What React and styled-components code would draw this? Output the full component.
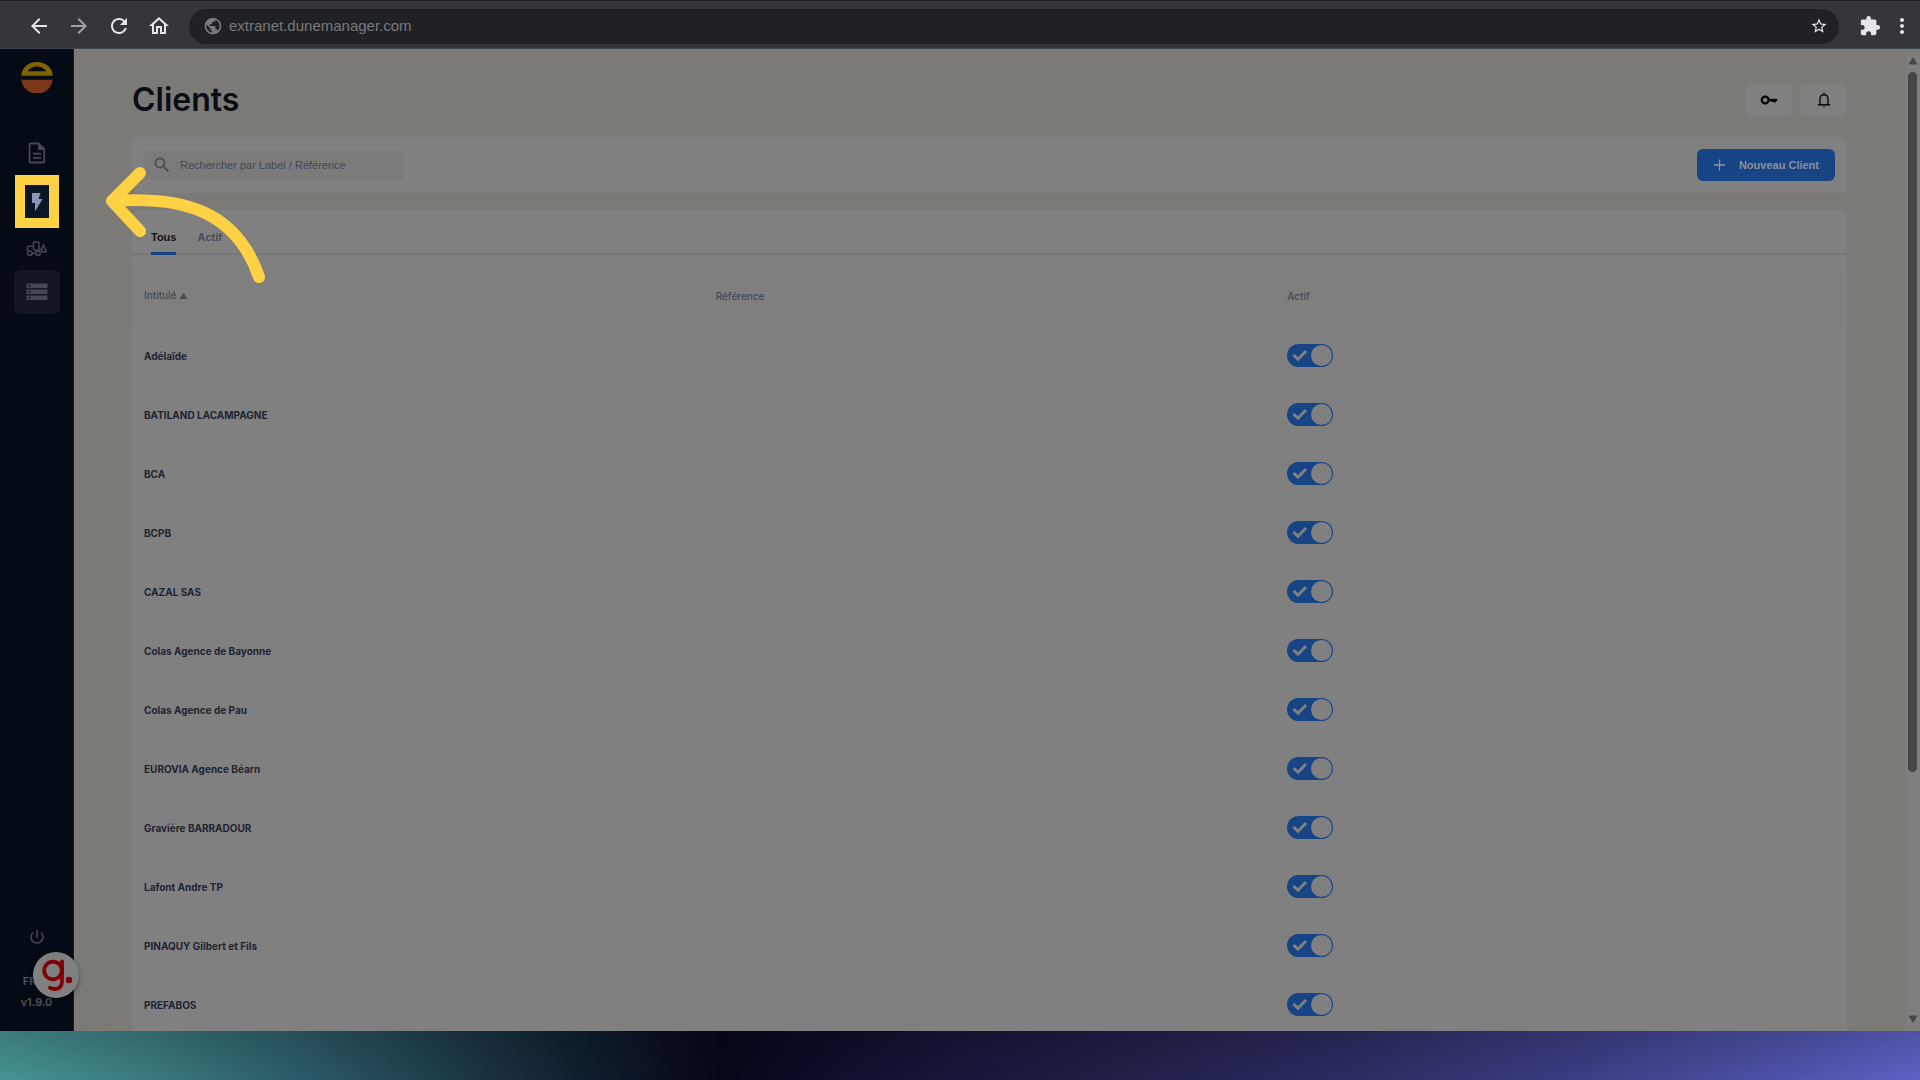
import React from 'react';
import styled, { createGlobalStyle } from 'styled-components';
import { MdArrowBack, MdArrowForward, MdRefresh, MdOutlineHome, MdPublic, MdStarBorder, MdExtension, MdMoreVert, MdSearch, MdPowerSettingsNew } from 'react-icons/md';

const Global = createGlobalStyle`
  * { box-sizing: border-box; }
  body { margin: 0; background: #04040f; font-family: Inter, "Liberation Sans", sans-serif; }
  button, input { font-family: inherit; margin: 0; }
  button { border: 0; padding: 0; background: none; cursor: pointer; }
  svg { display: block; flex: none; }
`;

const Page = styled.div`
  position: relative;
  display: flex;
  flex-direction: column;
  height: 100vh;
  overflow: hidden;
`;

const BrowserBar = styled.header`
  flex: none;
  display: flex;
  align-items: center;
  height: 49px;
  padding: 3px 6px 0 27px;
  background: #35363a;
  border-top: 1px solid #1e1f22;
  border-bottom: 1px solid #3c464c;
`;

const NavGroup = styled.div`
  display: flex;
  gap: 16px;
`;

const BarButton = styled.button`
  display: flex;
  align-items: center;
  justify-content: center;
  width: 24px;
  height: 24px;
  color: ${(p) => p.$color || '#e4e6e8'};
`;

const AddressBar = styled.div`
  flex: 1;
  display: flex;
  align-items: center;
  height: 35px;
  margin: 0 19px 0 18px;
  padding: 0 8px 0 14px;
  border-radius: 18px;
  background: #202124;
  color: #77797c;
`;

const AddressInput = styled.input`
  flex: 1;
  min-width: 0;
  margin-left: 6px;
  padding: 0;
  border: 0;
  outline: 0;
  background: transparent;
  color: #77797c;
  font-family: "Liberation Sans", sans-serif;
  font-size: 15px;
  line-height: 20px;
`;

const BarActions = styled.div`
  display: flex;
  gap: 8px;
`;

const Shell = styled.div`
  flex: 1;
  display: flex;
  min-height: 0;
`;

const Sidebar = styled.aside`
  position: relative;
  flex: none;
  display: flex;
  flex-direction: column;
  align-items: center;
  width: 74px;
  padding: 13px 0 18px;
  background: #040b14;
  border-right: 1px solid #1b2027;
`;

const SideNav = styled.nav`
  display: flex;
  flex-direction: column;
  align-items: center;
  gap: 1px;
  margin-top: 38px;
`;

const SideLink = styled.a`
  display: flex;
  align-items: center;
  justify-content: center;
  width: 46px;
  height: ${(p) => p.$height || 44}px;
  border-radius: 6px;
  background: ${(p) => (p.$active ? '#131520' : 'transparent')};
  color: ${(p) => p.$color || '#454753'};
`;

const Highlighted = styled(SideLink)`
  width: 44px;
  height: 53px;
  border: 10px solid #ffd144;
  border-radius: 0;
  background: #0b1727;
`;

const SideFoot = styled.div`
  display: flex;
  flex-direction: column;
  align-items: center;
  margin-top: auto;
  color: #4f525c;
  font-size: 11px;
  font-weight: 600;
  line-height: 21px;
`;

const PowerButton = styled.button`
  margin-bottom: 25px;
  color: #4a4c56;
`;

const HelpBadge = styled.button`
  position: absolute;
  left: 33px;
  bottom: 33px;
  width: 46px;
  height: 46px;
  border-radius: 50%;
  background: #808080;
  box-shadow: 0 2px 5px rgba(0, 0, 0, 0.4);
`;

const Main = styled.main`
  flex: 1;
  min-width: 0;
  padding: 31px 58px 0;
  overflow: hidden;
  background: #7c7a77;
`;

const TitleRow = styled.div`
  display: flex;
  align-items: center;
  justify-content: space-between;
  height: 40px;
`;

const Title = styled.h1`
  margin: 0;
  color: #0a0d14;
  font-size: 32px;
  font-weight: 600;
  line-height: 40px;
`;

const IconGroup = styled.div`
  display: flex;
  gap: 8px;
`;

const IconButton = styled.button`
  display: flex;
  align-items: center;
  justify-content: center;
  width: 47px;
  height: 34px;
  border-radius: 6px;
  background: #808080;
  color: #08090c;
`;

const Toolbar = styled.section`
  display: flex;
  align-items: center;
  justify-content: space-between;
  height: 56px;
  margin: 17px 0;
  padding: 0 12px;
  border-radius: 6px;
  background: #808080;
`;

const SearchBox = styled.label`
  display: flex;
  align-items: center;
  gap: 8px;
  width: 260px;
  height: 29px;
  padding: 0 8px;
  border-radius: 4px;
  background: #7b7b7b;
  color: #474a55;
`;

const SearchInput = styled.input`
  flex: 1;
  min-width: 0;
  padding: 0;
  border: 0;
  outline: 0;
  background: transparent;
  font-family: "Liberation Sans", sans-serif;
  font-size: 11px;
  line-height: 16px;
  &::placeholder { color: #434855; opacity: 1; }
`;

const PrimaryButton = styled.button`
  display: flex;
  align-items: center;
  justify-content: space-between;
  width: 138px;
  height: 32px;
  padding: 0 16px;
  border-radius: 6px;
  background: #164484;
  color: #8b919c;
  font-family: "Liberation Sans", sans-serif;
  font-size: 11px;
  font-weight: 700;
`;

const Panel = styled.section`
  border-radius: 6px 6px 0 0;
  background: #808080;
`;

const Tabs = styled.div`
  display: flex;
  gap: 21px;
  height: 45px;
  padding-left: 19px;
  border-bottom: 2px solid #75777a;
`;

const Tab = styled.button`
  height: 45px;
  padding-top: 11px;
  border-bottom: 3px solid ${(p) => (p.$active ? '#164484' : 'transparent')};
  color: ${(p) => (p.$active ? '#10131a' : '#474a55')};
  font-family: "Liberation Sans", sans-serif;
  font-size: 11px;
  font-weight: 700;
  line-height: 16px;
`;

const Table = styled.table`
  width: 100%;
  margin-top: 12px;
  border-collapse: collapse;
  table-layout: fixed;
`;

const HeadCell = styled.th`
  height: 59px;
  padding: 0 12px 2px;
  background: #7f7f7f;
  color: #464a55;
  font-size: 10px;
  font-weight: 500;
  line-height: 16px;
  text-align: left;
`;

const SortMark = styled.span`
  font-size: 8px;
`;

const Cell = styled.td`
  height: 59px;
  padding: 0 12px;
  color: #1f2430;
  font-size: 10px;
  font-weight: 700;
  line-height: 16px;
`;

const Switch = styled.label`
  position: relative;
  display: flex;
  align-items: center;
  width: 46px;
  height: 23px;
  padding-left: 5px;
  border-radius: 12px;
  background: #164484;
  color: #808080;
  cursor: pointer;

  &::after {
    content: '';
    position: absolute;
    top: 1px;
    right: 1px;
    width: 21px;
    height: 21px;
    border-radius: 50%;
    background: #808080;
  }
`;

const SwitchInput = styled.input`
  position: absolute;
  inset: 0;
  width: 100%;
  height: 100%;
  opacity: 0;
`;

const ScrollTrack = styled.div`
  flex: none;
  display: flex;
  flex-direction: column;
  align-items: center;
  width: 15px;
  padding: 8px 0;
  background: #7e7e7e;
`;

const ScrollThumb = styled.div`
  flex: 0 0 72.5%;
  width: 9px;
  margin: 7px 0 auto;
  border-radius: 5px;
  background: #464646;
`;

const Backdrop = styled.footer`
  flex: none;
  height: 49px;
  background:
    linear-gradient(rgba(0, 0, 0, 0.16), rgba(0, 0, 0, 0)),
    linear-gradient(94deg, #469393 0%, #3a7a7e 8%, #2c5a68 16%, #1c3846 24%, #0f1c2c 31%, #06061a 37.5%, #0e0d2a 43%, #1a1a3e 53%, #2b2b60 70%, #3c3d82 82%, #5254ad 94%, #6061c6 100%);
`;

const PointerArrow = styled.svg`
  position: absolute;
  left: 100px;
  top: 160px;
  pointer-events: none;
`;

const CLIENTS = [
  'Adélaïde', 'BATILAND LACAMPAGNE', 'BCA', 'BCPB', 'CAZAL SAS',
  'Colas Agence de Bayonne', 'Colas Agence de Pau', 'EUROVIA Agence Béarn',
  'Gravière BARRADOUR', 'Lafont Andre TP', 'PINAQUY Gilbert et Fils', 'PREFABOS',
];

const Logo = () => (
  <svg width="32" height="32" viewBox="0 0 32 32">
    <path fillRule="evenodd" fill="#806300" d="M0.3 13.8A15.7 13.8 0 0 1 31.7 13.8ZM6.5 9.2H25.5Q22 4.5 16 4.5T6.5 9.2Z" />
    <path fill="#7d371c" d="M0.3 17.7H31.7Q30.5 27 21 31H11Q1.5 27 0.3 17.7Z" />
  </svg>
);

const DocumentIcon = () => (
  <svg width="18" height="22" viewBox="0 0 18 22" fill="none" stroke="currentColor" strokeWidth="1.8">
    <path d="M2.5 1.5H10.5L16.2 7V19.2Q16.2 20.5 15 20.5H2.8Q1.5 20.5 1.5 19.2V2.5Q1.5 1.5 2.5 1.5Z" />
    <path fill="currentColor" stroke="none" d="M10 1V8H17Z" />
    <path d="M5 11.7H13M5 15.8H13" strokeWidth="1.8" />
  </svg>
);

const BoltIcon = () => (
  <svg width="12" height="20" viewBox="0 0 12 20" fill="currentColor">
    <path d="M1 1H9.5L7.5 7H11.5L4 19.5V11H1Z" />
  </svg>
);

const LoaderIcon = () => (
  <svg width="22" height="16" viewBox="0 0 22 16" fill="none" stroke="currentColor" strokeWidth="1.5">
    <path d="M1.5 10V6.5Q1.5 5.3 2.7 5.3H7.5V2Q7.5 1 8.5 1H12Q13 1 13 2V10M7.5 5.3V8L9 9.3H13M6 12.3H10M13 8.5H15.5" />
    <circle cx="3.8" cy="12.3" r="2.2" />
    <circle cx="12" cy="12.3" r="2.2" />
    <path d="M15.8 10.8V7.2L17.6 4L20.3 10.8Z" />
  </svg>
);

const StorageIcon = () => (
  <svg width="22" height="18" viewBox="0 0 22 18">
    {[0, 6, 12].map((y) => (
      <g key={y}>
        <rect x="0.5" y={y + 0.5} width="21" height="4.6" fill="currentColor" />
        <rect x="2.5" y={y + 1.9} width="1.8" height="1.8" fill="#131520" />
      </g>
    ))}
  </svg>
);

const KeyIcon = () => (
  <svg width="18" height="12" viewBox="0 0 18 12" fill="none" stroke="currentColor">
    <circle cx="5.2" cy="6" r="3.4" strokeWidth="2.4" />
    <path d="M9 6H17.2M14.8 6V8.6M12.2 6V8" strokeWidth="2.4" />
  </svg>
);

const BellIcon = () => (
  <svg width="14" height="16" viewBox="0 0 14 16" fill="none" stroke="currentColor" strokeWidth="1.4">
    <path d="M3 12.5V6.8Q3 2.7 7 2.7T11 6.8V12.5M0.8 12.7H13.2M7 0.8V2.6" />
    <path d="M5.6 14.2H8.4L7 15.6Z" fill="currentColor" stroke="none" />
  </svg>
);

const PlusIcon = () => (
  <svg width="13" height="12" viewBox="0 0 13 12" fill="none" stroke="currentColor" strokeWidth="1.3">
    <path d="M6.5 0.5V11.5M1 6H12" />
  </svg>
);

const CheckIcon = () => (
  <svg width="16" height="13" viewBox="0 0 16 13" fill="none" stroke="currentColor" strokeWidth="3">
    <path d="M1.5 6L6 10.2L14 2" />
  </svg>
);

const HelpMark = () => (
  <svg width="46" height="46" viewBox="0 0 46 46" fill="none" stroke="#7c0004" strokeWidth="3.8">
    <circle cx="20" cy="18.5" r="8.8" />
    <path d="M29 9.5V29Q29 37 22 37Q18.5 37 17 35.8" strokeLinecap="round" />
    <circle cx="36" cy="28" r="3.2" fill="#7c0004" stroke="none" />
  </svg>
);

const ScrollArrow = ({ down }) => (
  <svg width="10" height="8" viewBox="0 0 10 8" fill="#464646">
    <path d={down ? 'M0.5 0.5H9.5L5.7 7Q5 8 4.3 7Z' : 'M0.5 7.5H9.5L5.7 1Q5 0 4.3 1Z'} />
  </svg>
);

export default function App() {
  return (
    <Page>
      <Global />
      <BrowserBar>
        <NavGroup>
          <BarButton aria-label="Back"><MdArrowBack size={24} /></BarButton>
          <BarButton aria-label="Forward" $color="#a0a2a5"><MdArrowForward size={24} /></BarButton>
          <BarButton aria-label="Reload"><MdRefresh size={24} /></BarButton>
          <BarButton aria-label="Home"><MdOutlineHome size={24} /></BarButton>
        </NavGroup>
        <AddressBar>
          <MdPublic size={20} />
          <AddressInput aria-label="Address" defaultValue="extranet.dunemanager.com" />
          <BarButton aria-label="Bookmark"><MdStarBorder size={18} /></BarButton>
        </AddressBar>
        <BarActions>
          <BarButton aria-label="Extensions"><MdExtension size={22} /></BarButton>
          <BarButton aria-label="Menu"><MdMoreVert size={24} /></BarButton>
        </BarActions>
      </BrowserBar>

      <Shell>
        <Sidebar>
          <Logo />
          <SideNav aria-label="Navigation">
            <SideLink href="#documents" aria-label="Documents" $height={42}><DocumentIcon /></SideLink>
            <Highlighted href="#activity" aria-label="Activité" $color="#8f94b3"><BoltIcon /></Highlighted>
            <SideLink href="#vehicles" aria-label="Engins" $height={40}><LoaderIcon /></SideLink>
            <SideLink href="#lists" aria-label="Listes" $active><StorageIcon /></SideLink>
          </SideNav>
          <SideFoot>
            <PowerButton aria-label="Déconnexion"><MdPowerSettingsNew size={18} /></PowerButton>
            <span>FR-fr</span>
            <span>v1.9.0</span>
          </SideFoot>
          <HelpBadge aria-label="Aide"><HelpMark /></HelpBadge>
        </Sidebar>

        <Main>
          <TitleRow>
            <Title>Clients</Title>
            <IconGroup>
              <IconButton aria-label="Accès"><KeyIcon /></IconButton>
              <IconButton aria-label="Notifications"><BellIcon /></IconButton>
            </IconGroup>
          </TitleRow>
          <Toolbar>
            <SearchBox>
              <MdSearch size={20} />
              <SearchInput aria-label="Rechercher" placeholder="Rechercher par Label / Référence" />
            </SearchBox>
            <PrimaryButton><PlusIcon />Nouveau Client</PrimaryButton>
          </Toolbar>
          <Panel>
            <Tabs>
              <Tab $active>Tous</Tab>
              <Tab>Actif</Tab>
            </Tabs>
            <Table>
              <thead>
                <tr>
                  <HeadCell>Intitulé <SortMark>▲</SortMark></HeadCell>
                  <HeadCell>Référence</HeadCell>
                  <HeadCell>Actif</HeadCell>
                </tr>
              </thead>
              <tbody>
                {CLIENTS.map((name) => (
                  <tr key={name}>
                    <Cell>{name}</Cell>
                    <Cell />
                    <Cell>
                      <Switch>
                        <SwitchInput type="checkbox" defaultChecked aria-label={`Actif ${name}`} />
                        <CheckIcon />
                      </Switch>
                    </Cell>
                  </tr>
                ))}
              </tbody>
            </Table>
          </Panel>
        </Main>

        <ScrollTrack>
          <ScrollArrow />
          <ScrollThumb />
          <ScrollArrow down />
        </ScrollTrack>
      </Shell>
      <Backdrop />

      <PointerArrow width="170" height="130" viewBox="0 0 170 130" fill="none" stroke="#ffd144" strokeWidth="12" strokeLinecap="round" strokeLinejoin="round">
        <path d="M40 13L12 41L40 71M12 41C82 36 136 50 159 117" />
      </PointerArrow>
    </Page>
  );
}
